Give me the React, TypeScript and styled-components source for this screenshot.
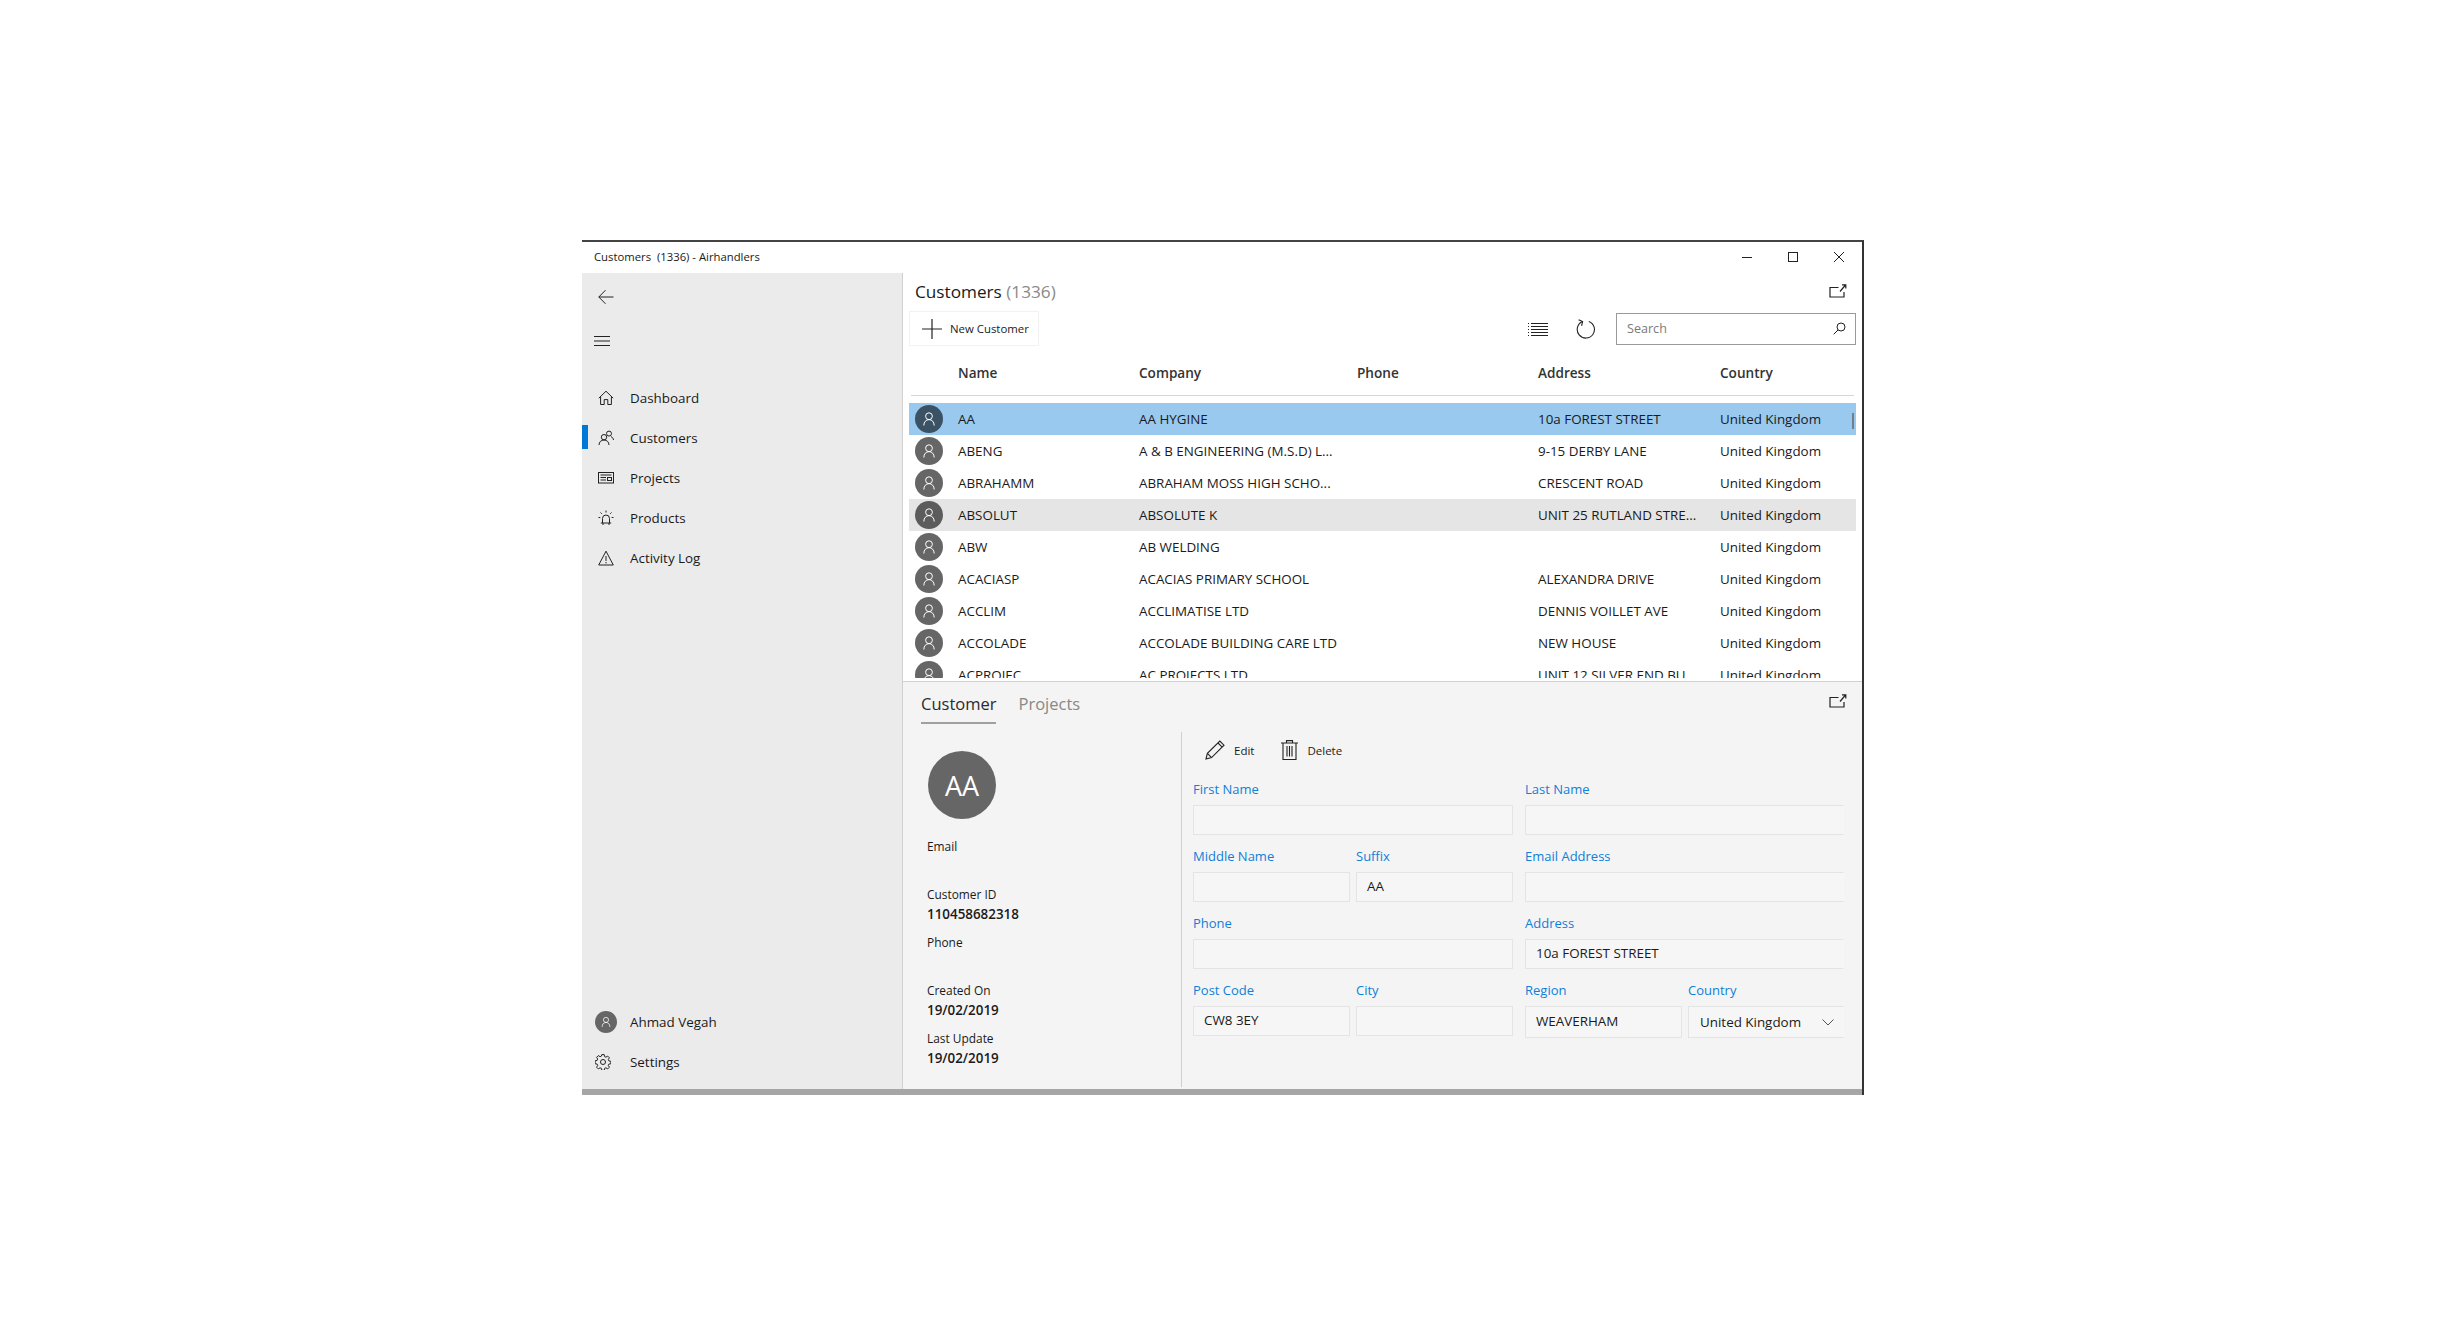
import React from "react";
import styled, { createGlobalStyle } from "styled-components";

const font = `"Open Sans", "Noto Sans", "Liberation Sans", sans-serif`;

const GlobalStyle = createGlobalStyle`
    html, body {
        margin: 0;
        padding: 0;
        background: #fff;
    }

    * {
        box-sizing: border-box;
    }

    body {
        font-family: ${font};
        color: #1a1a1a;
    }
`;

type CustomerRow = {
    name: string;
    company: string;
    address: string;
    state?: "selected" | "hover";
};

const rows: CustomerRow[] = [
    { name: "AA", company: "AA HYGINE", address: "10a FOREST STREET", state: "selected" },
    { name: "ABENG", company: "A & B ENGINEERING (M.S.D) L...", address: "9-15 DERBY LANE" },
    { name: "ABRAHAMM", company: "ABRAHAM MOSS HIGH SCHO...", address: "CRESCENT ROAD" },
    { name: "ABSOLUT", company: "ABSOLUTE K", address: "UNIT 25 RUTLAND STRE...", state: "hover" },
    { name: "ABW", company: "AB WELDING", address: "" },
    { name: "ACACIASP", company: "ACACIAS PRIMARY SCHOOL", address: "ALEXANDRA DRIVE" },
    { name: "ACCLIM", company: "ACCLIMATISE LTD", address: "DENNIS VOILLET AVE" },
    { name: "ACCOLADE", company: "ACCOLADE BUILDING CARE LTD", address: "NEW HOUSE" },
    { name: "ACPROJEC", company: "AC PROJECTS LTD", address: "UNIT 12 SILVER END BU..." },
];

const Line = (props: { size?: number; children: React.ReactNode; color?: string }) => (
    <svg width={props.size ?? 16} height={props.size ?? 16} viewBox="0 0 16 16" fill="none"
         stroke={props.color ?? "#222"} strokeWidth="1">
        {props.children}
    </svg>
);

const PersonIcon = (props: { size?: number }) => (
    <Line size={props.size ?? 16} color="#fff">
        <circle cx="8" cy="5.2" r="3.4"/>
        <path d="M2.8 14.5c0-3.4 2.2-5.9 5.2-5.9s5.2 2.5 5.2 5.9"/>
    </Line>
);

const OpenIcon = () => (
    <svg width="18" height="14" viewBox="0 0 18 14" fill="none" stroke="#222" strokeWidth="1.2">
        <path d="M9.5 3.5H1v9.5h14V8"/>
        <path d="M11 7.5 16.5 1M13 .8h3.8v3.6"/>
    </svg>
);

const PageHeadIcon = {
    back: (
        <Line><path d="M15.5 8H.8M7.5 1.2.8 8l6.7 6.8"/></Line>
    ),
    menu: (
        <Line><path d="M0 3.5h16M0 8h16M0 12.5h16"/></Line>
    ),
};

const navIcons: Record<string, React.ReactNode> = {
    Dashboard: (
        <Line><path d="M.8 8.2 8 1.2l7.2 7M2.6 6.8v7.7h3.6V9.6h3.6v4.9h3.6V6.8"/></Line>
    ),
    Customers: (
        <Line>
            <circle cx="6" cy="7.2" r="2.7"/>
            <path d="M1 15c0-3 2.2-5 5-5s5 2 5 5"/>
            <circle cx="11" cy="3.6" r="2.5"/>
            <path d="M13 6.6c1.4.6 2.3 1.8 2.5 3.4"/>
        </Line>
    ),
    Projects: (
        <Line>
            <rect x=".5" y="2.5" width="15" height="10.5"/>
            <path d="M2.5 5h11M2.5 7.5h5.5M2.5 10h5.5"/>
            <rect x="9.5" y="7.5" width="4" height="3"/>
        </Line>
    ),
    Products: (
        <Line>
            <path d="M4.5 13V8.5a3.5 3.5 0 0 1 7 0V13M2.8 13h10.4M5 13v2M11 13v2"/>
            <path d="M8 .5v2M2.5 2.5l1.3 1.3M13.5 2.5l-1.3 1.3M.5 7.5h1.8M13.7 7.5h1.8"/>
        </Line>
    ),
    "Activity Log": (
        <Line><path d="M8 1.2 15.3 15H.7zM8 6v5M8 12v1.4"/></Line>
    ),
};

const GearIcon = () => (
    <Line>
        <circle cx="8" cy="8" r="2.5"/>
        <path d="M6.8.6h2.4l.4 2 1.3.6 1.8-1.1 1.7 1.7-1.1 1.8.6 1.3 2 .4v2.4l-2 .4-.6 1.3 1.1 1.8-1.7 1.7-1.8-1.1-1.3.6-.4 2H6.8l-.4-2-1.3-.6-1.8 1.1-1.7-1.7 1.1-1.8-.6-1.3-2-.4V6.8l2-.4.6-1.3-1.1-1.8 1.7-1.7 1.8 1.1 1.3-.6z"/>
    </Line>
);

const Field = (props: { label: string; value?: string; open?: boolean; tall?: boolean }) => (
    <FieldWrap>
        <FieldLabel>{props.label}</FieldLabel>
        <FieldBox $open={props.open} $tall={props.tall}>{props.value}</FieldBox>
    </FieldWrap>
);

const InfoBlock = (props: { label: string; value?: string }) => (
    <Info>
        <InfoLabel>{props.label}</InfoLabel>
        <InfoValue>{props.value}</InfoValue>
    </Info>
);

export default function App() {
    return (
        <Page>
            <GlobalStyle/>
            <Window>
                <TitleBar>
                    <TitleText>{"Customers  (1336) - Airhandlers"}</TitleText>
                    <WindowButtons>
                        <WindowButton>
                            <svg width="10" height="10" viewBox="0 0 10 10" stroke="#222"><path d="M0 5.5h10"/></svg>
                        </WindowButton>
                        <WindowButton>
                            <svg width="10" height="10" viewBox="0 0 10 10" fill="none" stroke="#222"><rect x=".5" y=".5" width="9" height="9"/></svg>
                        </WindowButton>
                        <WindowButton>
                            <svg width="10" height="10" viewBox="0 0 10 10" stroke="#222"><path d="M0 0l10 10M10 0 0 10"/></svg>
                        </WindowButton>
                    </WindowButtons>
                </TitleBar>
                <Body>
                    <Sidebar>
                        <div>
                            <SideTool>{PageHeadIcon.back}</SideTool>
                            <SideTool $menu>{PageHeadIcon.menu}</SideTool>
                            <NavList>
                                {Object.keys(navIcons).map((label) => (
                                    <NavItem key={label} $active={label === "Customers"}>
                                        <IconSlot>{navIcons[label]}</IconSlot>
                                        {label}
                                    </NavItem>
                                ))}
                            </NavList>
                        </div>
                        <div>
                            <NavItem>
                                <IconSlot>
                                    <UserBadge><PersonIcon size={12}/></UserBadge>
                                </IconSlot>
                                Ahmad Vegah
                            </NavItem>
                            <NavItem>
                                <IconSlot $start><GearIcon/></IconSlot>
                                Settings
                            </NavItem>
                        </div>
                    </Sidebar>
                    <Main>
                        <ListPane>
                            <ListHead>
                                <Heading>Customers <HeadingCount>(1336)</HeadingCount></Heading>
                                <OpenIcon/>
                            </ListHead>
                            <Toolbar>
                                <NewButton>
                                    <svg width="20" height="20" viewBox="0 0 20 20" stroke="#222" strokeWidth="1.2">
                                        <path d="M0 10h20M10 0v20"/>
                                    </svg>
                                    New Customer
                                </NewButton>
                                <ToolbarRight>
                                    <svg width="20" height="14" viewBox="0 0 20 14" stroke="#222">
                                        <path d="M3 1.5h17M3 4.5h17M3 7.5h17M3 10.5h17M3 13.5h17"/>
                                        <path d="M0 1.5h1M0 4.5h1M0 7.5h1M0 10.5h1M0 13.5h1"/>
                                    </svg>
                                    <svg width="20" height="20" viewBox="0 0 20 20" fill="none" stroke="#222" strokeWidth="1.1">
                                        <path d="M6.4 2.6A8.6 8.6 0 1 0 12.8 2.4"/>
                                        <path d="M2.6 .8 6.6 2.6 5.6 6.8"/>
                                    </svg>
                                    <SearchBox>
                                        Search
                                        <svg width="13" height="13" viewBox="0 0 13 13" fill="none" stroke="#222">
                                            <circle cx="8" cy="5" r="4"/>
                                            <path d="M5 8 .7 12.3"/>
                                        </svg>
                                    </SearchBox>
                                </ToolbarRight>
                            </Toolbar>
                            <ColumnHeader>
                                <span/>
                                <span>Name</span>
                                <span>Company</span>
                                <span>Phone</span>
                                <span>Address</span>
                                <span>Country</span>
                            </ColumnHeader>
                            <Rows>
                                {rows.map((row) => (
                                    <Row key={row.name} $state={row.state}>
                                        <Avatar $state={row.state}><PersonIcon/></Avatar>
                                        <span>{row.name}</span>
                                        <span>{row.company}</span>
                                        <span/>
                                        <span>{row.address}</span>
                                        <span>United Kingdom</span>
                                        {row.state === "selected" && <ScrollMark/>}
                                    </Row>
                                ))}
                            </Rows>
                        </ListPane>
                        <DetailPane>
                            <TabBar>
                                <Tab $active>Customer</Tab>
                                <Tab>Projects</Tab>
                                <TabOpen><OpenIcon/></TabOpen>
                            </TabBar>
                            <DetailBody>
                                <Summary>
                                    <BigAvatar>AA</BigAvatar>
                                    <InfoBlock label="Email"/>
                                    <InfoBlock label="Customer ID" value="110458682318"/>
                                    <InfoBlock label="Phone"/>
                                    <InfoBlock label="Created On" value="19/02/2019"/>
                                    <InfoBlock label="Last Update" value="19/02/2019"/>
                                </Summary>
                                <FormPanel>
                                    <FormActions>
                                        <ActionButton>
                                            <svg width="20" height="20" viewBox="0 0 20 20" fill="none" stroke="#222" strokeWidth="1.1">
                                                <path d="M1 19l1.4-5.6L14.8 1l4.2 4.2L6.6 17.6z"/>
                                                <path d="M2.4 13.4l4.2 4.2M13 3l4.2 4.2"/>
                                            </svg>
                                            Edit
                                        </ActionButton>
                                        <ActionButton>
                                            <svg width="17" height="20" viewBox="0 0 17 20" fill="none" stroke="#222" strokeWidth="1.1">
                                                <path d="M0 3h17M2 3v16.5h13V3M5.5 3V.6h6V3"/>
                                                <path d="M6 6v10.5M8.5 6v10.5M11 6v10.5"/>
                                            </svg>
                                            Delete
                                        </ActionButton>
                                    </FormActions>
                                    <FormGrid>
                                        <Field label="First Name"/>
                                        <Field label="Last Name" open/>
                                        <FieldPair>
                                            <Field label="Middle Name"/>
                                            <Field label="Suffix" value="AA"/>
                                        </FieldPair>
                                        <Field label="Email Address" open/>
                                        <Field label="Phone"/>
                                        <Field label="Address" value="10a FOREST STREET" open/>
                                        <FieldPair>
                                            <Field label="Post Code" value="CW8 3EY"/>
                                            <Field label="City"/>
                                        </FieldPair>
                                        <FieldPair>
                                            <Field label="Region" value="WEAVERHAM" tall/>
                                            <FieldWrap>
                                                <FieldLabel>Country</FieldLabel>
                                                <SelectBox>
                                                    United Kingdom
                                                    <svg width="12" height="7" viewBox="0 0 12 7" fill="none" stroke="#555">
                                                        <path d="M.5.5 6 6l5.5-5.5"/>
                                                    </svg>
                                                </SelectBox>
                                            </FieldWrap>
                                        </FieldPair>
                                    </FormGrid>
                                </FormPanel>
                            </DetailBody>
                        </DetailPane>
                    </Main>
                </Body>
                <BottomStrip/>
            </Window>
        </Page>
    );
}

const Page = styled.div`
    width: 2446px;
    height: 1336px;
    padding: 240px 0 0 582px;
    background: #fff;
    overflow: hidden;
`;

const Window = styled.div`
    width: 1282px;
    height: 855px;
    display: flex;
    flex-direction: column;
    border-top: 2px solid #444;
    border-right: 2px solid #333;
    background: #fff;
`;

const TitleBar = styled.div`
    height: 31px;
    flex: none;
    display: flex;
    align-items: center;
    justify-content: space-between;
    padding: 0 0 2px 12px;
`;

const TitleText = styled.span`
    font-size: 11.3px;
    white-space: pre;
`;

const WindowButtons = styled.div`
    display: flex;
    padding-right: 18px;
    gap: 36px;
`;

const WindowButton = styled.div`
    width: 10px;
    height: 10px;
    display: flex;
`;

const Body = styled.div`
    flex: 1;
    display: flex;
    min-height: 0;
`;

const Sidebar = styled.aside`
    width: 321px;
    flex: none;
    display: flex;
    flex-direction: column;
    justify-content: space-between;
    background: #ebebeb;
    border-right: 1px solid #d0d0d0;
    padding: 2px 0 7px;
`;

const SideTool = styled.div<{ $menu?: boolean }>`
    height: 44px;
    display: flex;
    align-items: center;
    padding-left: ${(p) => (p.$menu ? "12px" : "16px")};
`;

const NavList = styled.nav`
    margin-top: 15px;
`;

const NavItem = styled.div<{ $active?: boolean }>`
    position: relative;
    height: 40px;
    display: flex;
    align-items: center;
    gap: 12px;
    padding: 0 0 1px 12px;
    font-size: 13.4px;

    &::before {
        content: "";
        display: ${(p) => (p.$active ? "block" : "none")};
        position: absolute;
        left: 0;
        top: 7px;
        width: 6px;
        height: 24px;
        background: #0078d7;
    }
`;

const IconSlot = styled.span<{ $start?: boolean }>`
    width: 24px;
    display: flex;
    justify-content: ${(p) => (p.$start ? "flex-start" : "center")};
    padding-left: ${(p) => (p.$start ? "1px" : "0")};
`;

const UserBadge = styled.span`
    width: 22px;
    height: 22px;
    border-radius: 50%;
    background: #666;
    display: flex;
    align-items: center;
    justify-content: center;
`;

const Main = styled.main`
    flex: 1;
    min-width: 0;
    display: flex;
    flex-direction: column;
`;

const ListPane = styled.section`
    height: 408px;
    flex: none;
    padding: 0 6px;
    overflow: hidden;
`;

const ListHead = styled.div`
    height: 38px;
    display: flex;
    align-items: center;
    justify-content: space-between;
    padding: 0 9px 2px 6px;
`;

const Heading = styled.h1`
    margin: 0;
    font-size: 17.2px;
    font-weight: 400;
`;

const HeadingCount = styled.span`
    color: #8a8a8a;
`;

const Toolbar = styled.div`
    height: 35px;
    display: flex;
    align-items: center;
    justify-content: space-between;
`;

const NewButton = styled.button`
    width: 130px;
    height: 35px;
    display: flex;
    align-items: center;
    gap: 8px;
    padding: 0 0 0 12px;
    background: #fff;
    border: 1px solid #f2f2f2;
    font-family: ${font};
    font-size: 11.4px;
    color: #1a1a1a;
`;

const ToolbarRight = styled.div`
    display: flex;
    align-items: center;
    gap: 28px;
`;

const SearchBox = styled.div`
    width: 240px;
    height: 32px;
    margin-left: -8px;
    display: flex;
    align-items: center;
    justify-content: space-between;
    padding: 0 9px 0 10px;
    border: 1px solid #9a9a9a;
    font-size: 12.6px;
    color: #7a7a7a;
`;

const columns = "49px 181px 218px 181px 182px 1fr";

const ColumnHeader = styled.div`
    height: 50px;
    display: grid;
    grid-template-columns: 47px 181px 218px 181px 182px 1fr;
    align-items: center;
    margin: 0 2px 7px;
    padding-top: 3px;
    border-bottom: 1px solid #d6d6d6;
    font-size: 13.6px;
    font-weight: 600;
    color: #333;
`;

const Rows = styled.div`
    height: 275px;
    overflow: hidden;
`;

const rowColor = { selected: "#99c9ef", hover: "#e5e5e5" };
const avatarColor = { selected: "#3b5164", hover: "#5c5c5c" };

const Row = styled.div<{ $state?: "selected" | "hover" }>`
    position: relative;
    height: 32px;
    display: grid;
    grid-template-columns: ${columns};
    align-items: center;
    font-size: 13.4px;
    white-space: nowrap;
    background: ${(p) => (p.$state ? rowColor[p.$state] : "transparent")};
`;

const Avatar = styled.span<{ $state?: "selected" | "hover" }>`
    width: 28px;
    height: 28px;
    margin-left: 6px;
    border-radius: 50%;
    display: flex;
    align-items: center;
    justify-content: center;
    background: ${(p) => (p.$state ? avatarColor[p.$state] : "#666")};
`;

const ScrollMark = styled.span`
    position: absolute;
    right: 2px;
    top: 10px;
    width: 2px;
    height: 16px;
    background: #6f7f8c;
`;

const DetailPane = styled.section`
    flex: 1;
    min-height: 0;
    background: #f4f4f4;
    border-top: 1px solid #d0d0d0;
`;

const TabBar = styled.div`
    position: relative;
    height: 50px;
    display: flex;
    align-items: flex-start;
    gap: 22px;
    padding: 10px 0 0 18px;
`;

const Tab = styled.div<{ $active?: boolean }>`
    height: 32px;
    font-size: 16.5px;
    line-height: 24px;
    color: ${(p) => (p.$active ? "#2b2b2b" : "#888")};
    border-bottom: 2px solid ${(p) => (p.$active ? "#a0a0a0" : "transparent")};
`;

const TabOpen = styled.div`
    position: absolute;
    right: 15px;
    top: 9px;
`;

const DetailBody = styled.div`
    display: flex;
    height: 355px;
`;

const Summary = styled.div`
    width: 279px;
    flex: none;
    padding: 19px 0 0 24px;
    border-right: 1px solid #d0d0d0;
`;

const BigAvatar = styled.div`
    width: 68px;
    height: 68px;
    margin: 0 0 17px 1px;
    border-radius: 50%;
    background: #666;
    color: #fff;
    display: flex;
    align-items: center;
    justify-content: center;
    font-size: 27px;
`;

const Info = styled.div`
    height: 48px;
`;

const InfoLabel = styled.div`
    font-size: 11.9px;
    line-height: 20px;
`;

const InfoValue = styled.div`
    font-size: 13.4px;
    line-height: 21px;
    font-weight: 600;
`;

const FormPanel = styled.div`
    flex: 1;
    padding-left: 11px;
`;

const FormActions = styled.div`
    height: 48px;
    display: flex;
    gap: 27px;
    padding: 8px 0 0 12px;
    align-items: flex-start;
`;

const ActionButton = styled.div`
    height: 20px;
    display: flex;
    align-items: center;
    gap: 9px;
    font-size: 11.5px;
`;

const FormGrid = styled.div`
    width: 651px;
    display: grid;
    grid-template-columns: 320px 319px;
    column-gap: 12px;
    row-gap: 12px;
`;

const FieldPair = styled.div`
    display: grid;
    grid-template-columns: 157px 1fr;
    column-gap: 6px;
`;

const FieldWrap = styled.div``;

const FieldLabel = styled.div`
    height: 25px;
    font-size: 13px;
    line-height: 19px;
    color: #0f7fd8;
`;

const FieldBox = styled.div<{ $open?: boolean; $tall?: boolean }>`
    height: ${(p) => (p.$tall ? "32px" : "30px")};
    display: flex;
    align-items: center;
    padding: 0 10px 2px;
    border: 1px solid #e4e4e4;
    border-right-color: ${(p) => (p.$open ? "transparent" : "#e4e4e4")};
    background: #f6f6f6;
    font-size: 13.4px;
    white-space: nowrap;
`;

const SelectBox = styled.div`
    height: 32px;
    display: flex;
    align-items: center;
    justify-content: space-between;
    padding: 0 9px 0 11px;
    border: 1px solid #e4e4e4;
    border-right-color: transparent;
    background: #f6f6f6;
    font-size: 13.4px;
    white-space: nowrap;
`;

const BottomStrip = styled.div`
    height: 6px;
    flex: none;
    background: #a6a6a6;
`;
